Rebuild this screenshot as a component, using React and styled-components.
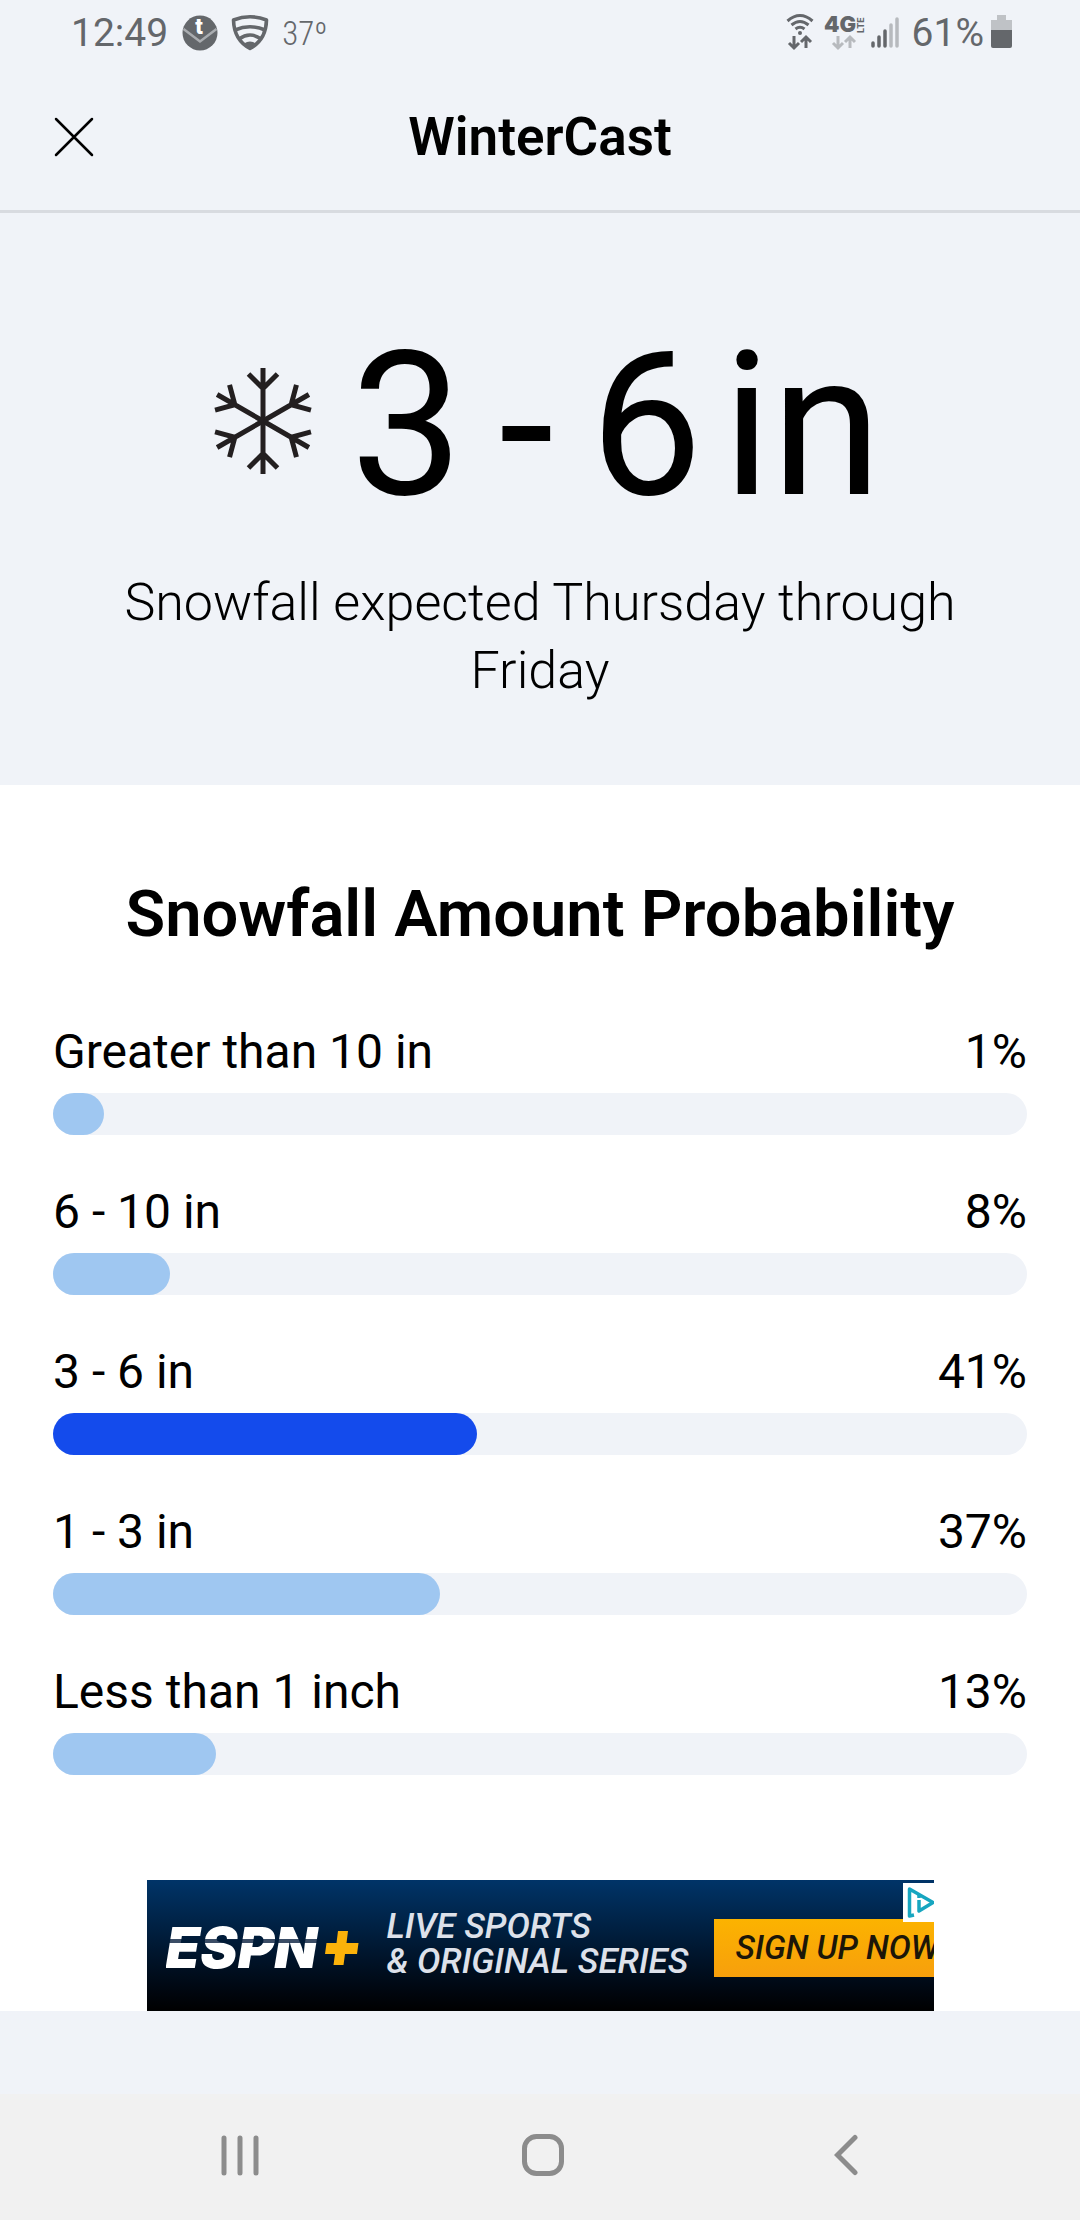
import React from 'react'
import styled, { createGlobalStyle } from 'styled-components'

const GlobalStyle = createGlobalStyle`
    * {
        box-sizing: border-box;
    }

    body {
        margin: 0;
        background: #f0f3f8;
        color: #000;
        font-family: Roboto, "Liberation Sans", sans-serif;
    }
`

const Page = styled.div`
    min-height: 100vh;
    display: flex;
    flex-direction: column;
`

const StatusBar = styled.div`
    height: 64px;
    padding: 2px 68px 0 71px;
    display: flex;
    justify-content: space-between;
    align-items: center;
    color: #64676b;
    font-size: 39px;

    svg {
        overflow: visible;
    }
`

const StatusGroup = styled.div`
    display: flex;
    align-items: center;
    gap: ${props => props.$gap}px;
`

const Temperature = styled.span`
    font-family: "Roboto Condensed", Roboto, sans-serif;
    font-size: 33px;
    font-weight: 300;
`

const Header = styled.header`
    display: grid;
    grid-template-columns: 48px 1fr 48px;
    align-items: center;
    height: 149px;
    padding: 0 50px;
    border-bottom: 3px solid #d8dbe0;
`

const IconButton = styled.button`
    display: flex;
    justify-content: center;
    align-items: center;
    padding: 0;
    border: 0;
    background: none;
    cursor: pointer;
`

const Title = styled.h1`
    margin: 0;
    text-align: center;
    font-size: 53px;
    font-weight: 600;
`

const Hero = styled.section`
    padding: 92px 100px 80px;
    text-align: center;
`

const Amount = styled.div`
    display: flex;
    justify-content: center;
    align-items: center;
    gap: 38px;
    height: 240px;
    padding-left: 16px;
    font-size: 200px;

    svg {
        margin-bottom: 8px;
    }
`

const AmountText = styled.div`
    display: flex;
    gap: 20px;
`

const Range = styled.div`
    display: flex;
    gap: 36px;
`

const Summary = styled.p`
    margin: 24px 0 0;
    font-size: 52px;
    line-height: 68px;
    font-weight: 300;
`

const Panel = styled.main`
    background: #fff;
    padding: 85px 53px 0;
`

const Heading = styled.h2`
    margin: 0 0 66px;
    text-align: center;
    font-size: 65px;
    line-height: 88px;
    font-weight: 600;
`

const Rows = styled.div`
    display: grid;
    grid-auto-rows: 160px;
    margin-bottom: 56px;
`

const RowText = styled.div`
    display: flex;
    justify-content: space-between;
    font-size: 48px;
    line-height: 56px;
    margin-bottom: 13px;
`

const Track = styled.div`
    height: 42px;
    border-radius: 21px;
    background: #f0f3f8;
`

const Fill = styled.div`
    height: 42px;
    border-radius: 21px;
    background: ${props => props.$top ? '#144bec' : '#9fc7f1'};
`

const Ad = styled.a`
    position: relative;
    display: grid;
    grid-template-columns: 159px 62px 327px max-content;
    align-items: center;
    width: 787px;
    max-width: 100%;
    height: 131px;
    margin: 0 auto;
    padding: 4px 0 0 19px;
    overflow: hidden;
    background: linear-gradient(#003468, #00060f 85%, #000);
    color: #fff;
    text-decoration: none;
    white-space: nowrap;
`

const AdLogo = styled.span`
    font-family: Inter, sans-serif;
    font-size: 56px;
    line-height: 56px;
    font-weight: 900;
    font-style: italic;
    color: transparent;
    background: linear-gradient(#fff 19px, #3b4d66 19px, #3b4d66 23px, #fff 23px);
    background-clip: text;
`

const AdText = styled.span`
    margin-bottom: 8px;
    color: #dde1ea;
    font-size: 35px;
    line-height: 35px;
    font-weight: 500;
    font-style: italic;
`

const AdAction = styled.span`
    padding: 0 22px;
    background: linear-gradient(#fcb300, #f79f0c);
    color: #1c1608;
    font-size: 33px;
    line-height: 58px;
    font-weight: 500;
    font-style: italic;
`

const AdChoices = styled.span`
    position: absolute;
    top: 3px;
    right: 0;
    display: flex;
    padding: 4px 0 4px 4px;
    background: #fff;
`

const NavBar = styled.nav`
    display: grid;
    grid-template-columns: repeat(3, 1fr);
    height: 126px;
    margin-top: auto;
    padding: 0 83px 4px 89px;
    background: #f1f1f1;
`

const probabilities = [
    { label: 'Greater than 10 in', value: 1 },
    { label: '6 - 10 in', value: 8 },
    { label: '3 - 6 in', value: 41, top: true },
    { label: '1 - 3 in', value: 37 },
    { label: 'Less than 1 inch', value: 13 },
]

const MailIcon = () => (
    <svg width="36" height="36" viewBox="0 0 36 36">
        <circle cx="18" cy="18" r="17.500" fill="#64676b" />
        <path d="M1.500 14L18 26.500L34.500 14" fill="none" stroke="#a9acb0" strokeWidth="2.500" />
        <text x="17" y="19" fill="#fff" fontSize="22" fontWeight="900" textAnchor="middle">t</text>
    </svg>
)

const ShieldIcon = () => (
    <svg width="36" height="38" viewBox="1 0 36 38" fill="none" stroke="#64676b" strokeWidth="3.600">
        <path d="M2.500 6Q19 -0.500 35.500 6Q35 26 19 34.500Q3 26 2.500 6Z" strokeLinejoin="round" />
        <path d="M4 16Q19 9.500 34 16M8 25Q19 17 30 25" />
        <path d="M13 29.500Q19 25.500 25 29.500L19 34Z" fill="#64676b" stroke="none" />
    </svg>
)

const Arrows = ({ x, color }) => (
    <path
        d={`M${x} 22v12M${x - 5} 29l5 5l5 -5M${x + 12} 34v-11M${x + 7} 28l5 -5l5 5`}
        fill="none"
        stroke={color}
        strokeWidth="3"
    />
)

const WifiIcon = () => (
    <svg width="28" height="38" viewBox="0 0 28 38">
        <path d="M1.500 7Q14 -4 26.500 7M5.500 11Q14 4 22.500 11M9.500 15Q14 11.500 18.500 15" fill="none" stroke="#64676b" strokeWidth="3" />
        <circle cx="14" cy="19" r="2" fill="#64676b" />
        <Arrows x={8} color="#64676b" />
    </svg>
)

const NetworkIcon = () => (
    <svg width="43" height="38" viewBox="2 0 43 38" fill="#64676b" fontFamily="Inter, sans-serif">
        <text x="5" y="18" fontSize="22" fontWeight="900">4G</text>
        <text transform="translate(45 19) rotate(-90)" fontSize="9" fontWeight="700">LTE</text>
        <Arrows x={19} color="#b7babe" />
    </svg>
)

const SignalIcon = () => (
    <svg width="34" height="38" viewBox="0 0 34 38" strokeWidth="3.500" strokeLinecap="round">
        <path d="M2 29v3M8 23v9M14 17v15" stroke="#64676b" />
        <path d="M20 11v21M26 5v27" stroke="#b7babe" />
    </svg>
)

const BatteryIcon = () => (
    <svg width="21" height="38" viewBox="0 0 21 38">
        <path d="M6 1h9v5h6v12H0V6h6z" fill="#bfc2c6" />
        <path d="M0 16h21v16q0 2 -2 2h-17q-2 0 -2 -2z" fill="#64676b" />
    </svg>
)

const Snowflake = () => (
    <svg width="98" height="108" viewBox="-49 -54 98 108" fill="none" stroke="#231f20" strokeWidth="5">
        {[0, 60, 120, 180, 240, 300].map(angle => (
            <path key={angle} d="M0 0V-53M-14.500 -47L0 -32.500L14.500 -47" transform={`rotate(${angle})`} />
        ))}
    </svg>
)

const ProbabilityRow = ({ label, value, top }) => (
    <div>
        <RowText>
            <span>{label}</span>
            <span>{value}%</span>
        </RowText>
        <Track>
            <Fill $top={top} style={{ width: `calc(42px + (100% - 42px) * ${value / 100})` }} />
        </Track>
    </div>
)

const App = () => {
    return (
        <>
            <GlobalStyle />
            <Page>
                <StatusBar>
                    <StatusGroup $gap={14}>
                        <span>12:49</span>
                        <MailIcon />
                        <ShieldIcon />
                        <Temperature>37º</Temperature>
                    </StatusGroup>
                    <StatusGroup $gap={7}>
                        <WifiIcon />
                        <NetworkIcon />
                        <SignalIcon />
                        <span>61%</span>
                        <BatteryIcon />
                    </StatusGroup>
                </StatusBar>
                <Header>
                    <IconButton aria-label="Close">
                        <svg width="40" height="40" viewBox="0 0 40 40" stroke="#000" strokeWidth="2.500" strokeLinecap="round">
                            <path d="M2 2L38 38M38 2L2 38" />
                        </svg>
                    </IconButton>
                    <Title>WinterCast</Title>
                </Header>
                <Hero>
                    <Amount>
                        <Snowflake />
                        <AmountText>
                            <Range>
                                <span>3</span>
                                <span>-</span>
                                <span>6</span>
                            </Range>
                            <span>in</span>
                        </AmountText>
                    </Amount>
                    <Summary>Snowfall expected Thursday through Friday</Summary>
                </Hero>
                <Panel>
                    <Heading>Snowfall Amount Probability</Heading>
                    <Rows>
                        {probabilities.map(item => (
                            <ProbabilityRow key={item.label} {...item} />
                        ))}
                    </Rows>
                    <Ad href="#">
                        <AdLogo>ESPN</AdLogo>
                        <svg width="34" height="34" viewBox="0 0 34 34">
                            <path d="M13 0h10l-1.500 12h12l-1.500 11h-12l-1.500 11h-10l1.500 -11h-10l1.500 -11h10z" fill="#fbb20a" />
                        </svg>
                        <AdText>LIVE SPORTS<br />&amp; ORIGINAL SERIES</AdText>
                        <AdAction>SIGN UP NOW</AdAction>
                        <AdChoices>
                            <svg width="27" height="31" viewBox="0 0 27 31" fill="none" stroke="#17a6c0" strokeWidth="3.500" strokeLinejoin="round">
                                <path d="M7 28L2.500 29V2L26 15.500L12 24V13" />
                                <path d="M12 8v3" />
                            </svg>
                        </AdChoices>
                    </Ad>
                </Panel>
                <NavBar>
                    <IconButton aria-label="Recent apps">
                        <svg width="40" height="42" viewBox="0 0 40 42" stroke="#8c8c8c" strokeWidth="5" strokeLinecap="round">
                            <path d="M4 4v35M20 4v35M36 4v35" />
                        </svg>
                    </IconButton>
                    <IconButton aria-label="Home">
                        <svg width="42" height="42" viewBox="0 0 42 42">
                            <rect x="2.500" y="2.500" width="37" height="37" rx="12" fill="none" stroke="#8c8c8c" strokeWidth="5" />
                        </svg>
                    </IconButton>
                    <IconButton aria-label="Back">
                        <svg width="24" height="42" viewBox="0 0 24 42" fill="none" stroke="#8c8c8c" strokeWidth="5" strokeLinecap="round">
                            <path d="M21 3.500L3.500 21L21 38.500" />
                        </svg>
                    </IconButton>
                </NavBar>
            </Page>
        </>
    )
}

export default App
